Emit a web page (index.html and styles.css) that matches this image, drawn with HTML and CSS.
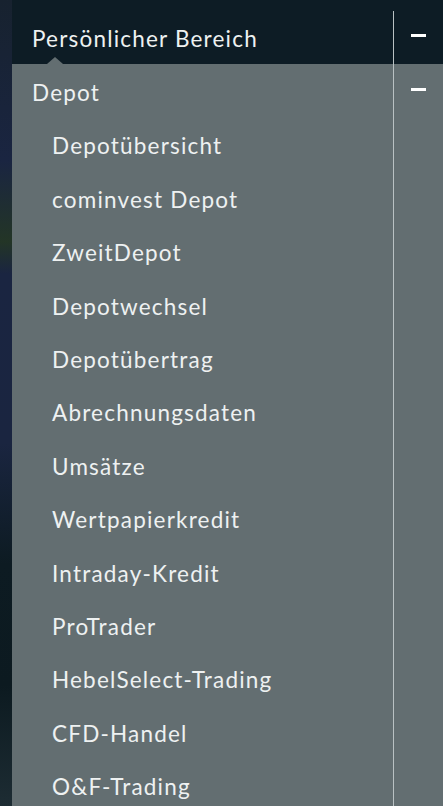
FILE: index.html
```html
<!DOCTYPE html>
<html lang="de">

<head>
    <meta charset="UTF-8">
    <meta name="viewport" content="width=device-width, initial-scale=1.0">
    <title>Menü</title>
    <link rel="stylesheet" href="styles.css">
</head>

<body>

    <div class="backdrop"></div>

    <nav class="menu">
        <!-- Top level -->
        <div class="menu-head">
            <div class="head-label">Persönlicher Bereich</div>
            <div class="toggle head-toggle"><span class="minus"></span></div>
        </div>

        <!-- Depot section -->
        <div class="menu-body">
            <div class="menu-list">
                <div class="section-title">Depot</div>
                <ul class="sub-list">
                    <li>Depotübersicht</li>
                    <li>cominvest Depot</li>
                    <li>ZweitDepot</li>
                    <li>Depotwechsel</li>
                    <li>Depotübertrag</li>
                    <li>Abrechnungsdaten</li>
                    <li>Umsätze</li>
                    <li>Wertpapierkredit</li>
                    <li>Intraday-Kredit</li>
                    <li>ProTrader</li>
                    <li>HebelSelect-Trading</li>
                    <li>CFD-Handel</li>
                    <li>O&amp;F-Trading</li>
                </ul>
            </div>
            <div class="toggle body-toggle"><span class="minus"></span></div>
        </div>
    </nav>

</body>

</html>
```

FILE: styles.css
```css
html,
body {
    margin: 0;
    padding: 0;
    height: 100%;
    overflow: hidden;
}

body {
    font-family: Lato, 'Open Sans', sans-serif;
    background-color: #18233a; /* blurred page behind the menu */
    display: flex;
}

.backdrop {
    width: 12px;
    flex-shrink: 0;
    background: linear-gradient(to bottom,
            #17222f 0%,
            #1a2541 20%,
            #233526 30%,
            #1a2541 34%,
            #1a2540 55%,
            #0d1b22 70%,
            #0c1a20 85%,
            #1d2c33 100%);
}

.menu {
    flex: 1;
    display: flex;
    flex-direction: column;
    color: #eef1f1;
    font-size: 22.5px;
    letter-spacing: 1.2px;
}

.menu-head {
    height: 64px;
    flex-shrink: 0;
    background-color: #0d1c25;
    display: flex;
    position: relative;
}

/* small notch under the active item */
.menu-head::after {
    content: "";
    position: absolute;
    left: 35px;
    bottom: 0;
    border-left: 8px solid transparent;
    border-right: 8px solid transparent;
    border-bottom: 7px solid #636e71;
}

.head-label {
    flex: 1;
    padding: 26px 0 0 20px;
    line-height: 26px;
}

.toggle {
    width: 49px;
    border-left: 1px solid #b9c1c3;
    display: flex;
    justify-content: center;
}

.head-toggle {
    margin-top: 11px;
    padding-top: 23px;
}

.minus {
    display: block;
    width: 15px;
    height: 3px;
    background-color: #ffffff;
}

.menu-body {
    flex: 1;
    background-color: #636e71;
    display: flex;
}

.menu-list {
    flex: 1;
}

.section-title {
    padding-left: 20px;
    height: 53.4px;
    line-height: 57px;
}

.body-toggle {
    padding-top: 24px;
}

.sub-list {
    list-style: none;
    margin: 0;
    padding: 0;
}

.sub-list li {
    padding-left: 40px;
    height: 53.4px;
    line-height: 57px;
}
```
